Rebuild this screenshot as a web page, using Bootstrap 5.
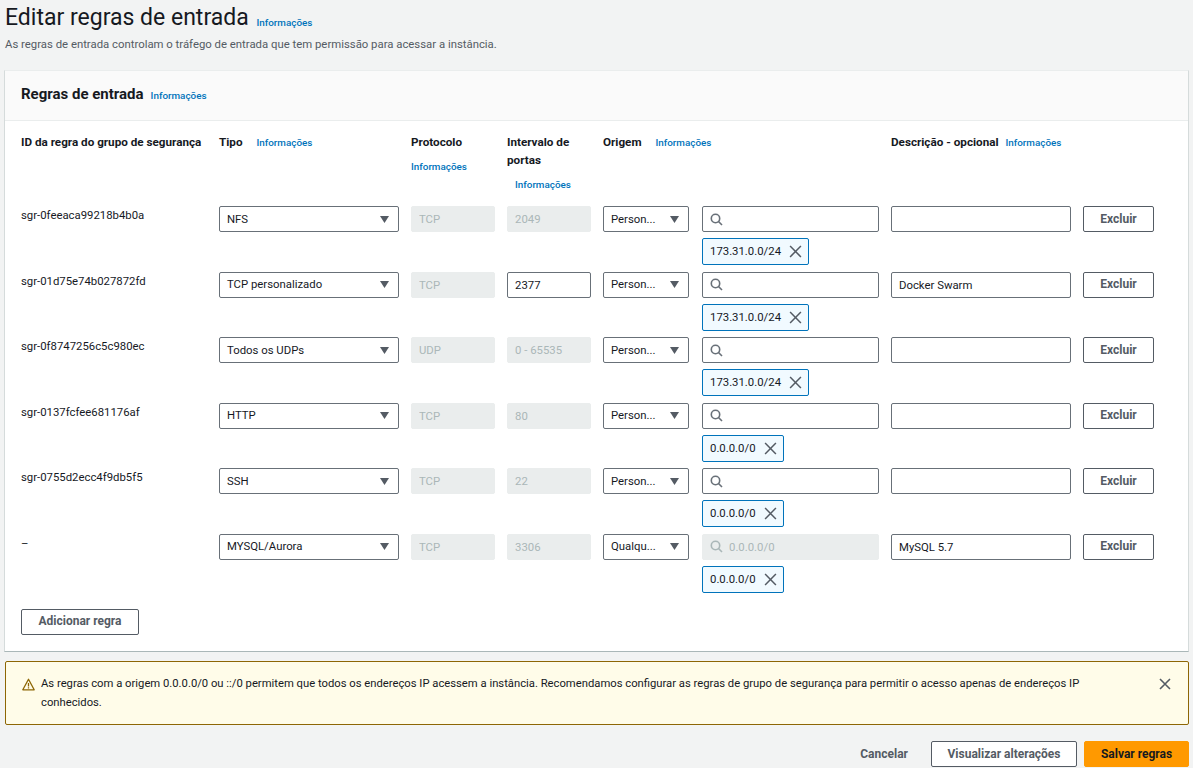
<!DOCTYPE html>
<html lang="pt-BR">
<head>
  <meta charset="UTF-8">
  <title>Editar regras de entrada</title>
  <link href="https://cdn.jsdelivr.net/npm/bootstrap@5.3.3/dist/css/bootstrap.min.css" rel="stylesheet">
  <style>
    html, body { height: 768px; overflow: hidden; }
    body { background: #f2f3f3; color: #16191f; font-family: Roboto, "Liberation Sans", sans-serif; font-size: 11.35px; line-height: 18px; }
    .page-wrap { padding: 0 4px 0 5px; }
    .page-title { font-size: 23px; line-height: 30px; font-weight: 400; margin: 0; padding-top: 3px; }
    .page-title .info-link { margin-left: 2px; position: relative; top: 1px; }
    .info-link { font-size: 9.9px; line-height: 1; font-weight: 500; color: #0073bb; text-decoration: none; }
    .info-gap { margin-left: 11px; }
    .info-under { margin-top: 6px; }
    .page-sub { color: #545b64; margin: 2px 0 17px; height: 18px; }
    .rules-box { background: #fff; margin-left: -1px; border-left: 1px solid #d5dbdb; border-top: 1px solid #eaeded; border-right: 1px solid #d5dbdb; border-bottom: 1px solid #aab7b8; height: 582px; }
    .rules-head { background: #fafafa; border-bottom: 1px solid #eaeded; height: 50px; padding: 0 16px; gap: 7px; }
    .rules-head h2 { font-size: 15px; font-weight: 700; margin: 0 0 3px; }
    .rules-body { padding: 12px 16px 0; }
    .rule-grid { display: grid; grid-template-columns: 186px 180px 84px 84px 87px 177px 180px 71px; column-gap: 12px; }
    .rule-head { height: 73px; font-weight: 700; font-size: 11.7px; }
    .rule-row { height: 65.6px; }
    .rule-id { margin-top: 0; }
    .fake-select, .fake-field { height: 26px; border: 1px solid #687078; border-radius: 2px; background: #fff; padding: 0 7px; }
    .fake-select { padding-right: 9px; }
    .fake-select span { flex: 1; min-width: 0; padding-bottom: 1px; }
    .origin-select { margin-right: 1px; }
    .field-input { height: 26px; min-height: 26px; border: 1px solid #687078; border-radius: 2px; padding: 0 7px; font-size: 11.35px; color: #16191f; line-height: 18px; }
    .field-input:disabled { background: #eaeded; border-color: #eaeded; color: #aab7b8; opacity: 1; }
    .fake-field input { border: 0; outline: 0; padding: 0 0 0 6px; width: 100%; background: transparent; font-size: 11.35px; }
    .fake-field.is-off { background: #eaeded; border-color: #eaeded; }
    .fake-field.is-off input { color: #aab7b8; }
    .ip-token { height: 27px; margin-top: 6px; border: 1px solid #0073bb; border-radius: 2px; background: #f1faff; padding: 0 6px 1px 7px; gap: 8px; width: fit-content; }
    .ip-token svg { margin-top: 1px; }
    .aws-btn { height: 26px; border: 1px solid #545b64; border-radius: 2px; background: #fff; color: #545b64; font-size: 12px; font-weight: 700; line-height: 18px; padding: 0 0 1px; }
    .add-btn { width: 118px; margin-top: 9.4px; }
    .warn-box { margin-top: 9px; height: 64px; background: #fffce9; border: 1px solid #8d6605; border-radius: 2px; padding: 12px 17px 12px 16px; line-height: 19px; font-size: 11.25px; }
    .warn-text { width: 1080px; margin-left: 6px; }
    .foot-bar { margin-top: 16px; }
    .btn-plain { border: 0; background: none; color: #545b64; font-weight: 700; font-size: 12px; margin-right: 23px; padding: 0 0 1px; }
    .btn-review { width: 146px; }
    .btn-save { width: 105px; margin-left: 7px; background: #f90; border-color: #f90; color: #16191f; }
  </style>
</head>
<body>
  <div class="page-wrap">
    <h1 class="page-title">Editar regras de entrada <a href="#" class="info-link">Informações</a></h1>
    <p class="page-sub">As regras de entrada controlam o tráfego de entrada que tem permissão para acessar a instância.</p>

    <div class="rules-box">
      <div class="rules-head d-flex align-items-center">
        <h2>Regras de entrada</h2>
        <a href="#" class="info-link">Informações</a>
      </div>
      <div class="rules-body">
        <div class="rule-grid rule-head">
          <div class="text-nowrap">ID da regra do grupo de segurança</div>
          <div>Tipo <a href="#" class="info-link info-gap">Informações</a></div>
          <div>Protocolo<div class="info-under"><a href="#" class="info-link">Informações</a></div></div>
          <div>Intervalo de portas<div class="info-under ms-2"><a href="#" class="info-link">Informações</a></div></div>
          <div class="text-nowrap">Origem <a href="#" class="info-link info-gap">Informações</a></div>
          <div></div>
          <div class="text-nowrap">Descrição - opcional <a href="#" class="info-link ms-1">Informações</a></div>
          <div></div>
        </div>
        <div id="lista-regras"></div>
        <button class="aws-btn add-btn">Adicionar regra</button>
      </div>
    </div>

    <div class="warn-box d-flex align-items-start">
      <svg class="flex-shrink-0 mt-1" width="13" height="13" viewBox="0 0 16 16" fill="none" stroke="#8d6605" stroke-width="1.6" stroke-linejoin="round"><path d="M8 1.5 1 14.5h14z"/><path d="M8 6v4.5M8 11.5v1.4"/></svg>
      <div class="warn-text">As regras com a origem 0.0.0.0/0 ou ::/0 permitem que todos os endereços IP acessem a instância. Recomendamos configurar as regras de grupo de segurança para permitir o acesso apenas de endereços IP conhecidos.</div>
      <svg class="ms-auto mt-1 flex-shrink-0" width="12" height="12" viewBox="0 0 12 12" stroke="#545b64" stroke-width="1.6"><path d="M1 1l10 10M11 1 1 11"/></svg>
    </div>

    <div class="foot-bar d-flex justify-content-end align-items-center">
      <button class="btn-plain">Cancelar</button>
      <button class="aws-btn btn-review">Visualizar alterações</button>
      <button class="aws-btn btn-save">Salvar regras</button>
    </div>
  </div>

  <script src="https://cdn.jsdelivr.net/npm/bootstrap@5.3.3/dist/js/bootstrap.bundle.min.js"></script>
  <script>
    const regras = [
      { id: "sgr-0feeaca99218b4b0a", tipo: "NFS", proto: "TCP", porta: "2049", origem: "Person...", ip: "173.31.0.0/24", desc: "" },
      { id: "sgr-01d75e74b027872fd", tipo: "TCP personalizado", proto: "TCP", porta: "2377", editavel: true, origem: "Person...", ip: "173.31.0.0/24", desc: "Docker Swarm" },
      { id: "sgr-0f8747256c5c980ec", tipo: "Todos os UDPs", proto: "UDP", porta: "0 - 65535", origem: "Person...", ip: "173.31.0.0/24", desc: "" },
      { id: "sgr-0137fcfee681176af", tipo: "HTTP", proto: "TCP", porta: "80", origem: "Person...", ip: "0.0.0.0/0", desc: "" },
      { id: "sgr-0755d2ecc4f9db5f5", tipo: "SSH", proto: "TCP", porta: "22", origem: "Person...", ip: "0.0.0.0/0", desc: "" },
      { id: "–", tipo: "MYSQL/Aurora", proto: "TCP", porta: "3306", origem: "Qualqu...", ip: "0.0.0.0/0", desc: "MySQL 5.7", fixo: true }
    ];

    const seta = `<svg width="9" height="7" viewBox="0 0 9 7" fill="#545b64"><path d="M0 0h9L4.5 7z"/></svg>`;
    const xis = `<svg width="13" height="13" viewBox="0 0 12 12" stroke="#545b64" stroke-width="1.4"><path d="M1 1l10 10M11 1 1 11"/></svg>`;
    const lupa = (cor) => `<svg class="flex-shrink-0" width="13" height="13" viewBox="0 0 13 13" fill="none" stroke="${cor}" stroke-width="1.6"><circle cx="5.5" cy="5.5" r="4.2"/><path d="M8.5 8.5 12 12"/></svg>`;

    const lista = document.getElementById("lista-regras");
    regras.forEach(r => {
      const item = document.createElement("div");
      item.className = "rule-grid rule-row";
      item.innerHTML = `
        <div class="rule-id">${r.id}</div>
        <div class="fake-select d-flex align-items-center"><span>${r.tipo}</span>${seta}</div>
        <input class="form-control field-input" value="${r.proto}" disabled>
        <input class="form-control field-input" value="${r.porta}" ${r.editavel ? "" : "disabled"}>
        <div class="fake-select origin-select d-flex align-items-center"><span class="text-nowrap">${r.origem}</span>${seta}</div>
        <div>
          <div class="fake-field d-flex align-items-center ${r.fixo ? "is-off" : ""}">
            ${lupa(r.fixo ? "#aab7b8" : "#687078")}
            <input ${r.fixo ? 'value="0.0.0.0/0" disabled' : ""}>
          </div>
          <div class="ip-token d-flex align-items-center">${r.ip} ${xis}</div>
        </div>
        <input class="form-control field-input" value="${r.desc}">
        <button class="aws-btn">Excluir</button>
      `;
      lista.appendChild(item);
    });
  </script>
</body>
</html>
